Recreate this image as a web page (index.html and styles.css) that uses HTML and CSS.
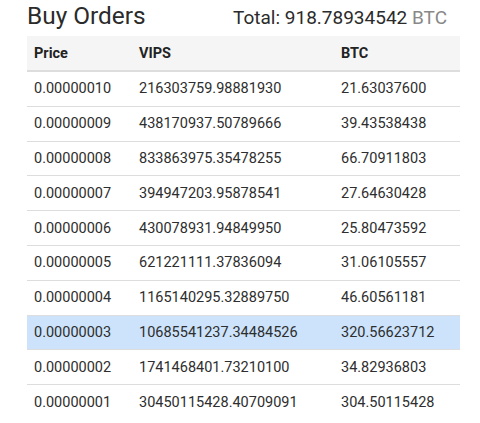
FILE: index.html
```html
<!DOCTYPE html>
<html>
<head>
<meta charset="utf-8">
<link rel="stylesheet" href="styles.css">
</head>
<body>
<div class="panel">
  <div class="head">
    <h2 class="title">Buy Orders</h2>
    <div class="total">Total: 918.78934542 <span class="unit">BTC</span></div>
  </div>
  <table class="orders">
    <thead>
      <tr><th class="c1">Price</th><th class="c2">VIPS</th><th class="c3">BTC</th></tr>
    </thead>
    <tbody>
      <tr><td>0.00000010</td><td>216303759.98881930</td><td>21.63037600</td></tr>
      <tr><td>0.00000009</td><td>438170937.50789666</td><td>39.43538438</td></tr>
      <tr><td>0.00000008</td><td>833863975.35478255</td><td>66.70911803</td></tr>
      <tr><td>0.00000007</td><td>394947203.95878541</td><td>27.64630428</td></tr>
      <tr><td>0.00000006</td><td>430078931.94849950</td><td>25.80473592</td></tr>
      <tr><td>0.00000005</td><td>621221111.37836094</td><td>31.06105557</td></tr>
      <tr><td>0.00000004</td><td>1165140295.32889750</td><td>46.60561181</td></tr>
      <tr class="hl"><td>0.00000003</td><td>10685541237.34484526</td><td>320.56623712</td></tr>
      <tr><td>0.00000002</td><td>1741468401.73210100</td><td>34.82936803</td></tr>
      <tr><td>0.00000001</td><td>30450115428.40709091</td><td>304.50115428</td></tr>
    </tbody>
  </table>
</div>
</body>
</html>
```

FILE: styles.css
```css
html, body {
  margin: 0;
  padding: 0;
  background: #fff;
}
body {
  font-family: Roboto, "Liberation Sans", sans-serif;
  color: #333;
}
.panel {
  width: 433px;
  margin-left: 27px;
}
.head {
  display: flex;
  justify-content: space-between;
  align-items: baseline;
  height: 36px;
}
.title {
  margin: 0;
  font-size: 24.4px;
  font-weight: 400;
  line-height: 32px;
  color: #2b2b2b;
}
.total {
  font-size: 19px;
  margin-right: 13px;
  color: #2b2b2b;
}
.unit {
  color: #888;
}
.orders {
  width: 433px;
  border-collapse: collapse;
  font-size: 14.5px;
}
.orders th {
  background: #f5f5f5;
  text-align: left;
  font-weight: 700;
  font-size: 14.5px;
  padding: 0 7px;
  height: 34px;
  border-bottom: 2px solid #ddd;
  color: #222;
}
.c1 { width: 91px; }
.c2 { width: 188px; }
.orders td {
  padding: 0 7px;
  height: 33.8px;
  border-bottom: 1px solid #ddd;
  color: #2e2e2e;
}
.orders tbody tr:last-child td {
  border-bottom: none;
}
.orders tr.hl td {
  background: #cce3fb;
}
```
